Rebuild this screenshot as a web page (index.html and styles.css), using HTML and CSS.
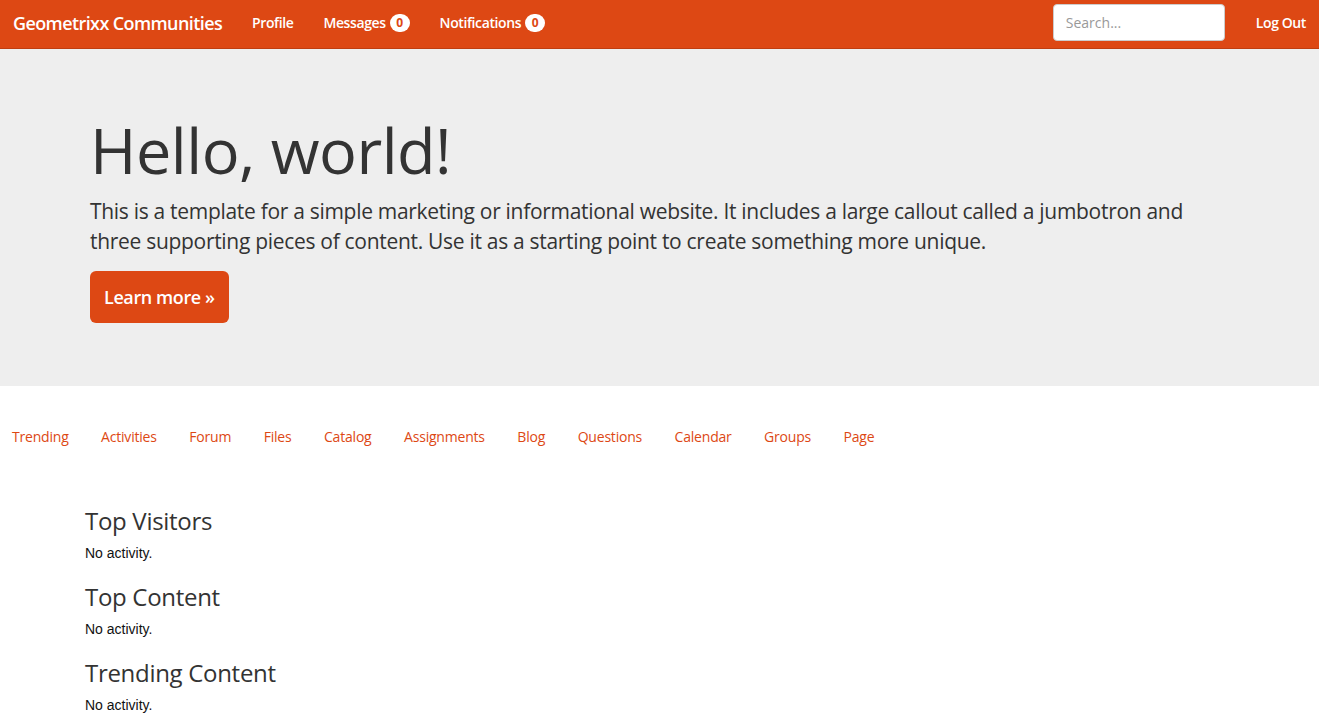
FILE: index.html
```html
<!DOCTYPE html>
<html>
<head>
<meta charset="utf-8">
<link rel="stylesheet" href="styles.css">
</head>
<body>
<nav class="navbar">
  <a class="brand" href="#">Geometrixx Communities</a>
  <ul class="nav-links">
    <li><a href="#">Profile</a></li>
    <li><a href="#">Messages <span class="badge">0</span></a></li>
    <li><a href="#">Notifications <span class="badge">0</span></a></li>
  </ul>
  <div class="nav-right">
    <input class="search" type="text" placeholder="Search...">
    <a class="logout" href="#">Log Out</a>
  </div>
</nav>
<section class="jumbotron">
  <h1>Hello, world!</h1>
  <p>This is a template for a simple marketing or informational website. It includes a large callout called a jumbotron and three supporting pieces of content. Use it as a starting point to create something more unique.</p>
  <a class="btn" href="#">Learn more &raquo;</a>
</section>
<ul class="tabs">
  <li><a href="#">Trending</a></li>
  <li><a href="#">Activities</a></li>
  <li><a href="#">Forum</a></li>
  <li><a href="#">Files</a></li>
  <li><a href="#">Catalog</a></li>
  <li><a href="#">Assignments</a></li>
  <li><a href="#">Blog</a></li>
  <li><a href="#">Questions</a></li>
  <li><a href="#">Calendar</a></li>
  <li><a href="#">Groups</a></li>
  <li><a href="#">Page</a></li>
</ul>
<main class="content">
  <h3>Top Visitors</h3>
  <p>No activity.</p>
  <h3>Top Content</h3>
  <p>No activity.</p>
  <h3>Trending Content</h3>
  <p>No activity.</p>
</main>
</body>
</html>
```
FILE: styles.css
```css
* { box-sizing: border-box; }
html, body { margin: 0; padding: 0; }
body {
  font-family: "Open Sans", "Noto Sans", sans-serif;
  color: #333;
  background: #fff;
  font-size: 14px;
}
a { text-decoration: none; }
ul { list-style: none; margin: 0; padding: 0; }

.navbar {
  height: 49px;
  background: #dd4814;
  border-bottom: 1px solid #bf3e11;
  display: flex;
  align-items: center;
  padding: 0 13px 3px;
}
.brand {
  color: #fff;
  font-size: 18px;
  font-weight: 600;
  letter-spacing: -0.6px;
  margin-right: 30px;
}
.nav-links { display: flex; gap: 30px; }
.nav-links a {
  color: #fff;
  font-size: 14px;
  font-weight: 600;
  letter-spacing: -0.4px;
  display: flex;
  align-items: center;
}
.badge {
  display: inline-block;
  background: #fff;
  color: #dd4814;
  border-radius: 10px;
  min-width: 20px;
  height: 18px;
  line-height: 18px;
  text-align: center;
  font-size: 12px;
  font-weight: 700;
  letter-spacing: 0;
  margin-left: 4px;
  padding: 0 5px;
}
.nav-right { margin-left: auto; display: flex; align-items: center; }
.search {
  width: 172px;
  height: 37px;
  border: 1px solid #ccc;
  border-radius: 4px;
  padding: 6px 12px;
  font-family: inherit;
  font-size: 14px;
  color: #555;
  margin-right: 31px;
}
.search::placeholder { color: #999; }
.logout { color: #fff; font-size: 14px; font-weight: 600; letter-spacing: -0.4px; }

.jumbotron {
  background: #eee;
  padding: 66px 90px 63px;
  height: 337px;
}
.jumbotron h1 {
  margin: 0 0 12px;
  font-size: 63px;
  font-weight: 400;
  line-height: 1.1;
  letter-spacing: -0.5px;
}
.jumbotron p {
  margin: 0 0 15px;
  font-size: 21px;
  line-height: 30px;
  letter-spacing: -0.3px;
  max-width: 1110px;
}
.btn {
  display: inline-block;
  background: #dd4814;
  color: #fff;
  font-size: 18px;
  font-weight: 600;
  letter-spacing: -0.4px;
  padding: 13px 14px;
  line-height: 26px;
  border-radius: 6px;
}

.tabs {
  display: flex;
  gap: 32.5px;
  padding: 0 12px;
  margin-top: 41px;
}
.tabs a { color: #dd4814; font-size: 14px; line-height: 20px; letter-spacing: -0.2px; }

.content { padding: 59px 85px 0; }
.content h3 {
  margin: 0;
  font-size: 24px;
  font-weight: 400;
  line-height: 30px;
  letter-spacing: -0.3px;
}
.content p {
  font-family: "Liberation Sans", Arial, sans-serif;
  font-size: 14px;
  margin: 8px 0 20px;
  line-height: 18px;
  color: #111;
}
```
